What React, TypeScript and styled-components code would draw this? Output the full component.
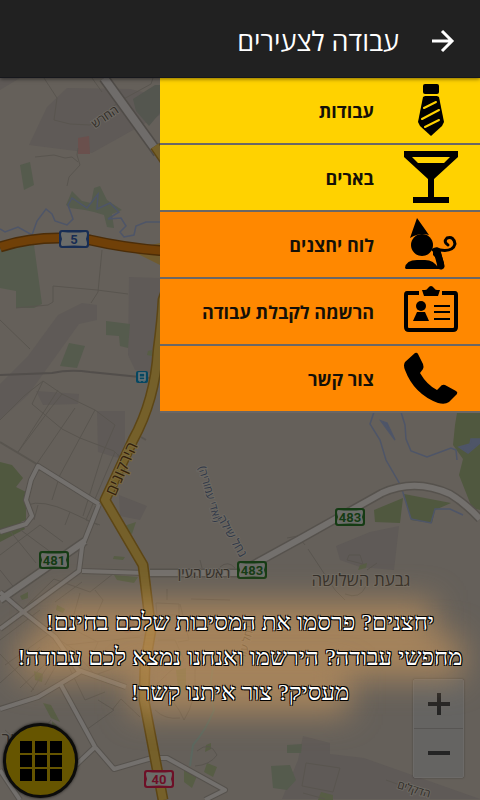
import React from "react";
import styled, { createGlobalStyle } from "styled-components";

const GlobalStyle = createGlobalStyle`
  *, *::before, *::after { box-sizing: border-box; }
  html, body { margin: 0; padding: 0; background: #65605a; }
`;

const Page = styled.div`
  position: relative;
  display: flex;
  flex-direction: column;
  min-height: 100vh;
  overflow: hidden;
  background: #65605a;
  font-family: "Open Sans", "Noto Sans", "Liberation Sans", sans-serif;
`;

const MapCanvas = styled.svg`
  position: absolute;
  inset: 0;
  width: 100%;
  height: 100%;
`;

const Header = styled.header`
  position: relative;
  z-index: 2;
  display: flex;
  align-items: center;
  gap: 28px;
  height: 78px;
  padding: 4px 21px 0 16px;
  background: #212121;
  border-bottom: 1px solid #16171c;
  box-shadow: 0 1px 4px rgba(0, 0, 0, 0.5);
`;

const Title = styled.h1`
  margin: 0;
  color: #fff;
  font-size: 27px;
  line-height: 36px;
  font-weight: 400;
`;

const BackButton = styled.button`
  display: flex;
  padding: 0;
  border: 0;
  background: none;
  color: #fff;
  cursor: pointer;
`;

const Menu = styled.nav`
  position: relative;
  z-index: 1;
  width: 66.6667%;
  margin-inline: 0 auto;
`;

const MenuList = styled.ul`
  margin: 0;
  padding: 0;
  list-style: none;
`;

const MenuLink = styled.a<{ $tone: "yellow" | "orange" }>`
  display: flex;
  align-items: center;
  gap: 29px;
  height: 67px;
  padding-inline: 21px;
  border-bottom: 2px solid #6b6765;
  background: ${({ $tone }) => ($tone === "yellow" ? "#ffd200" : "#ff8800")};
  color: #141008;
  font-size: 18px;
  line-height: 24px;
  font-weight: 700;
  text-decoration: none;
`;

const MenuIcon = styled.svg`
  flex: none;
  width: 56px;
  height: 56px;
  fill: #000;
`;

const Promo = styled.section`
  position: relative;
  z-index: 1;
  isolation: isolate;
  display: flex;
  flex-direction: column;
  align-items: center;
  margin-top: auto;
  padding: 24px 8px 90px;
  color: #fff;
  font-family: "Liberation Serif", serif;
  font-size: 24px;
  line-height: 35px;
  text-align: center;
  text-shadow: 1px 1px 0 #000, -1px -1px 0 #000, 1px -1px 0 #000, -1px 1px 0 #000;
  pointer-events: none;
`;

const PromoLine = styled.p`
  position: relative;
  margin: 0;

  &::before {
    content: "";
    position: absolute;
    inset: -4px 0;
    z-index: -1;
    background: rgba(205, 153, 93, 0.62);
    filter: blur(16px);
  }
`;

const GridButton = styled.button`
  position: absolute;
  left: 3px;
  bottom: 2px;
  z-index: 1;
  display: flex;
  align-items: center;
  justify-content: center;
  width: 75px;
  height: 75px;
  padding: 0;
  border: 3px solid #0c0c0b;
  border-radius: 50%;
  background: #665500;
  box-shadow: 0 0 3px #111;
`;

const ZoomControl = styled.div`
  position: absolute;
  right: 16px;
  bottom: 22px;
  display: flex;
  flex-direction: column;
  width: 51px;
  border: 1px solid #6c6a68;
  border-radius: 2px;
  background: #656462;
  box-shadow: 0 0 2px rgba(0, 0, 0, 0.35);
`;

const ZoomButton = styled.button`
  display: flex;
  align-items: center;
  justify-content: center;
  height: 48px;
  padding: 0;
  border: 0;
  background: none;
  color: #242424;

  & + & {
    height: 49px;
    border-top: 1px solid #575553;
  }
`;

const Label = styled.text`
  font-family: "Open Sans", "Noto Sans", sans-serif;
  fill: #302c27;
  text-anchor: middle;
  paint-order: stroke;
  stroke: #6c6862;
  stroke-width: 2px;
`;

const WaterLabel = styled(Label)`
  fill: #303848;
`;

const RoadLabel = styled(Label)`
  fill: #33200c;
  stroke: #7a6a3c;
`;

const ShieldText = styled.text`
  font-family: Roboto, "Liberation Sans", sans-serif;
  font-size: 13px;
  font-weight: 700;
  text-anchor: middle;
`;

const Shield = ({ x, y, color, children }: { x: number; y: number; color: string; children: string }) => (
  <g>
    <rect x={x - 15} y={y - 9} width="30" height="18" rx="3" fill={color} />
    <path
      d={`M${x - 12} ${y - 7}Q${x} ${y - 6} ${x + 12} ${y - 7}Q${x + 14} ${y - 6} ${x + 12} ${y}Q${x + 14} ${y + 6} ${x + 12} ${y + 7}Q${x} ${y + 6} ${x - 12} ${y + 7}Q${x - 14} ${y + 6} ${x - 12} ${y}Q${x - 14} ${y - 6} ${x - 12} ${y - 7}Z`}
      fill="#6b6c69"
    />
    <ShieldText x={x} y={y + 5} fill={color}>{children}</ShieldText>
  </g>
);

const WHITE_ROADS =
  "M0 532L26 524L32 516L26 500L31 480L38 466L99 504M99 504L82 547L79 571L0 629M82 571L145 573M0 592L22 611L55 637L78 670L126 687M0 709L38 697L80 672M60 683L95 747L114 769L152 758L167 758L225 790L205 800M95 747L76 765M0 770L20 800";
const WIDE_ROADS = "M0 600L85 541M150 573H238L300 539L382 493Q415 478 450 494Q465 503 480 519";
const YELLOW_ROAD =
  "M155 146L185 190Q178 260 163 300Q162 320 158 350Q155 400 133 440L105 500L143 565L151 630L145 665L144 700L163 800";
const HIGHWAY = "M0 247Q40 234 90 240Q125 248 165 251";

const CityMap = () => (
  <MapCanvas viewBox="0 0 480 800" preserveAspectRatio="xMidYMid slice" aria-hidden="true">
    <g fill="#5f5a57">
      <path d="M0 78H20L0 90ZM67 88L130 89L160 96V115L92 153L29 145L47 107Z" />
      <path d="M129 277L160 278V375L135 370L128 355ZM82 303L97 305V320L79 324L28 395L0 420V384L28 356L58 315Z" />
      <path d="M36 391L79 394L78 404L43 405ZM97 411L125 411V460L98 452ZM336 546L370 532L399 526L394 570L360 567L340 560Z" />
      <path d="M303 736L330 743V754L364 758L480 799H282L298 760ZM119 495L147 506L140 520L120 516Z" />
    </g>
    <g fill="#555b4d">
      <path d="M78 138L89 136L90 154L78 154Z" fill="#6a504d" />
      <path d="M20 165L30 162L34 185L24 190ZM66 205L72 191L82 201L91 203L94 188L100 186L107 200L122 210L112 214L114 228L107 227L104 215L94 212L85 210L70 208Z" />
      <path d="M0 248L34 245L42 304L34 308L16 308V291L0 288ZM106 321L130 324L128 348L120 346L119 336L106 335ZM69 343L85 346L77 368L60 366Z" />
      <path d="M133 99L155 85H160V113L149 126L136 111Z" fill="#54564f" />
      <path d="M0 462L12 465L23 478L16 487L26 492V520L0 530Z" fill="#50583f" />
      <path d="M457 413H480V510L472 508L459 475L463 459L453 445L455 425Z" fill="#50583f" />
      <path d="M374 510L403 498L400 523L375 522ZM404 494L451 503L435 510L432 523L411 520Z" fill="#50583f" />
      <path d="M0 520L20 520L25 529L0 542Z" fill="#50583f" />
      <path d="M271 766L290 765L296 780L287 790L273 788ZM287 745L302 744L301 753H287Z" />
      <path d="M184 767L197 776L192 788L184 782ZM207 763L217 767L213 777L204 772ZM114 575L138 577L134 583L117 580ZM124 526L136 522L132 534L124 532ZM114 556L125 557L123 560L113 559ZM43 703L51 705L60 722L51 718ZM52 721L62 730L59 740L52 732Z" fill="#575d45" />
      <path d="M321 792L333 795V800H318ZM148 351L152 350V356L147 355ZM360 565L367 563L366 568L358 570ZM20 596L28 592V598L22 600ZM57 605L65 609L63 613L56 610ZM34 671L43 674L42 682L35 680ZM176 670L186 668V692L178 688ZM206 745L211 743V749L205 752Z" fill="#575d45" />
    </g>
    <g fill="none" stroke="#4e5568" strokeWidth="1.5">
      <path d="M0 229L5 232L18 227L32 235L37 221L46 209L52 214L55 221L67 225L73 219L68 205L72 198L87 208L98 194L97 209L110 203L119 212L108 219L121 218L126 226L120 232L124 237L134 235L136 226L146 222H160" />
      <path d="M374 412L370 424L380 440L386 460L401 486L411 519M401 412L405 425L406 439L411 451L427 457L451 448L456 450L457 460M411 519L431 523L435 509H450L463 515" />
      <path d="M381 421L387 423L395 440Z" fill="#4e5568" />
      <path d="M459 447L470 444L471 439H480L480 443L468 453Z" fill="#4e5568" />
    </g>
    <path d="M213 668Q208 690 214 710Q206 730 193 745L190 766" fill="none" stroke="#5b675f" strokeWidth="2" />
    <g fill="none" stroke="#59554f" strokeWidth="1">
      <path d="M44 78L57 98L54 120L70 124L90 125L120 101L151 84L153 78M92 78L102 92M35 157L54 155L65 158L72 157L78 162M78 148L77 155L80 165L69 177L67 186" />
      <path d="M102 250L98 292L91 303M16 308L48 305L53 302V286L97 290L128 294M0 320L30 349M0 420L24 396L43 381L62 394L95 410L115 425L102 455L83 516M43 381L32 404L62 429L80 438L114 451L118 455M58 390L18 452M75 408L36 465M95 410L60 475L52 500M115 452L86 520L100 525M62 394L50 409L18 452M27 505Q42 499 70 512L65 525" />
      <path d="M38 505L34 520M70 512L98 525M0 555L40 525L63 542M10 531L36 563M18 528L52 553M28 580L55 552M0 570L16 590M20 612L54 579L90 592L118 570M55 602L82 582M35 624L75 650M63 624L98 642L88 665M80 593L70 628M95 590L103 600L92 625M0 640L40 610M5 665L60 626M0 683L40 647M20 688L59 651M31 692L55 655M45 685L62 655M0 654L34 690M66 645L140 637M64 657L85 700L105 692M82 660L95 675L123 665" />
      <path d="M156 603L179 604V630L158 630ZM191 599L230 600M180 604L189 640L178 642M158 615H179M167 589V600M158 640H175L184 660Q168 672 155 686M160 692Q176 700 184 720Q197 700 195 670L204 650M155 710Q165 720 180 718M197 751Q210 740 217 755Q210 765 195 766" />
      <path d="M308 549L335 590L345 600M349 555H360L363 564L347 560ZM367 570L377 563M305 545L298 536L287 538M345 594Q360 600 366 586M306 763L340 768L333 792L302 786ZM303 793L325 799M386 780L408 788M200 560L202 568M220 567Q228 560 235 568M98 700L114 710L86 730M112 710L121 699L140 717M35 740L51 720M5 730L36 758" />
      <path d="M0 442L40 466M118 455L123 461M141 437L146 440" strokeWidth="2" />
      <path d="M0 375L52 373Q70 369 90 372L150 378" stroke="#524e4b" strokeWidth="2" />
    </g>
    <g fill="none" strokeLinejoin="round">
      <path d="M104 78L158 153" stroke="#504c48" strokeWidth="11" />
      <path d="M104 78L158 153" stroke="#6f6c6a" strokeWidth="8" />
      <path d={WHITE_ROADS} stroke="#56524d" strokeWidth="6" />
      <path d={WIDE_ROADS} stroke="#56524d" strokeWidth="9" />
      <path d={WHITE_ROADS} stroke="#73706d" strokeWidth="4" />
      <path d={WIDE_ROADS} stroke="#73706d" strokeWidth="6" />
      <path d={YELLOW_ROAD} stroke="#5d4615" strokeWidth="11" />
      <path d={YELLOW_ROAD} stroke="#75602a" strokeWidth="8" />
      <path d="M130 250L160 243V265Z" fill="#705b2e" />
      <path d={HIGHWAY} stroke="#4c2d08" strokeWidth="11" />
      <path d={HIGHWAY} stroke="#704008" strokeWidth="8" />
    </g>
    <circle cx="128" cy="626" r="7" fill="#5d4b50" />
    <Shield x={74} y={239} color="#172d54">5</Shield>
    <Shield x={350} y={517} color="#153b14">483</Shield>
    <Shield x={252} y={570} color="#153b14">483</Shield>
    <Shield x={54} y={560} color="#153b14">481</Shield>
    <Shield x={159} y={779} color="#6d1027">40</Shield>
    <g>
      <rect x="136" y="371" width="12" height="12" rx="2" fill="#064761" />
      <rect x="139" y="373" width="6" height="7" fill="none" stroke="#747879" strokeWidth="1.5" />
      <path d="M139 377H145M140 381V382M144 381V382" stroke="#747879" />
    </g>
    <Label x="0" y="4" fontSize="12" transform="translate(105 117) rotate(-34)">החרש</Label>
    <RoadLabel x="0" y="5" fontSize="16" transform="translate(122 469) rotate(-66)">הירקונים</RoadLabel>
    <Label x="204" y="578" fontSize="14">ראש העין</Label>
    <Label x="361" y="586" fontSize="17">גבעת השלושה</Label>
    <Label x="0" y="4" fontSize="11" transform="translate(414 789) rotate(17)">הדקלים</Label>
    <Label x="8" y="745" fontSize="17">יר</Label>
    <Label x="0" y="4" fontSize="11" transform="translate(246 641) rotate(-75)">נחל עוז</Label>
    <WaterLabel x="0" y="4" fontSize="11" transform="translate(210 494) rotate(74)">(ואדי עמוריה)</WaterLabel>
    <WaterLabel x="0" y="4" fontSize="12" transform="translate(232 536) rotate(60)">נחל שילה</WaterLabel>
  </MapCanvas>
);

const TieIcon = () => (
  <MenuIcon viewBox="0 0 56 56" aria-hidden="true">
    <rect x="20" y="1" width="16" height="10" rx="2" />
    <path d="M22 13H34L36 14L41 39L39 43L28 53L17 43L15 39L20 14Z" />
    <path d="M21 25L33 19M19 36L36 27M22 44L36 37" fill="none" stroke="#ffd200" strokeWidth="2" strokeLinecap="round" />
  </MenuIcon>
);

const GlassIcon = () => (
  <MenuIcon viewBox="0 0 56 56" aria-hidden="true">
    <path fillRule="evenodd" d="M1 1H55V7L31 29V47H46V53H10V47H25V29L1 7ZM9 7L15 13H41L47 7Z" />
  </MenuIcon>
);

const JesterIcon = () => (
  <MenuIcon viewBox="0 0 56 56" aria-hidden="true">
    <path d="M14 1L26 18Q17 15 7 21Z" />
    <circle cx="19" cy="28" r="11" />
    <path d="M2 51Q3 43 14 43H22Q31 43 35 51L34 52H3Z" />
    <path d="M30 34Q33 30 37 33L41 46Q41 52 35 52H28L34 50Q36 43 30 38Z" />
    <path d="M34 34L38 49" fill="none" stroke="#000" strokeWidth="7" strokeLinecap="round" />
    <path d="M30 33Q33 31 37 33Q50 35 52 27Q51 19 44 21Q40 25 45 28" fill="none" stroke="#000" strokeWidth="3" strokeLinecap="round" />
  </MenuIcon>
);

const BadgeIcon = () => (
  <MenuIcon viewBox="0 0 56 56" aria-hidden="true">
    <path d="M16 9H4Q3 9 3 11V43Q3 46 6 46H50Q53 46 53 43V11Q53 9 52 9H39" fill="none" stroke="#000" strokeWidth="4" />
    <path d="M19 6H22Q24 6 25 4Q28 0 31 4Q32 6 34 6H37L35 12H21Z" />
    <circle cx="18" cy="22" r="5" />
    <path d="M14 28H22L26 37H10Z" />
    <path d="M31 22H47M31 28H47M31 35H47" stroke="#000" strokeWidth="2" />
  </MenuIcon>
);

const PhoneIcon = () => (
  <MenuIcon viewBox="0 0 56 56" aria-hidden="true">
    <path d="M12 2L2 11Q0 14 2 19Q11 43 35 52Q42 54 46 51L54 43Q55 41 53 40L42 34Q39 33 37 36L34 39Q24 34 17 22L20 18Q21 16 20 13L15 3Q14 1 12 2Z" />
  </MenuIcon>
);

const MENU = [
  { label: "עבודות", tone: "yellow", Icon: TieIcon },
  { label: "בארים", tone: "yellow", Icon: GlassIcon },
  { label: "לוח יחצנים", tone: "orange", Icon: JesterIcon },
  { label: "הרשמה לקבלת עבודה", tone: "orange", Icon: BadgeIcon },
  { label: "צור קשר", tone: "orange", Icon: PhoneIcon },
] as const;

const PROMO_LINES = [
  "יחצנים? פרסמו את המסיבות שלכם בחינם!",
  "מחפשי עבודה? הירשמו ואנחנו נמצא לכם עבודה!",
  "מעסיק? צור איתנו קשר!",
];

export default function App() {
  return (
    <Page dir="rtl" lang="he">
      <GlobalStyle />
      <CityMap />
      <Header>
        <BackButton type="button" aria-label="חזרה">
          <svg width="32" height="32" viewBox="0 0 32 32" fill="none" stroke="currentColor" strokeWidth="3">
            <path d="M5 16H25M15 6L25 16L15 26" />
          </svg>
        </BackButton>
        <Title>עבודה לצעירים</Title>
      </Header>
      <Menu>
        <MenuList>
          {MENU.map(({ label, tone, Icon }) => (
            <li key={label}>
              <MenuLink href="#" $tone={tone}>
                <Icon />
                {label}
              </MenuLink>
            </li>
          ))}
        </MenuList>
      </Menu>
      <ZoomControl>
        <ZoomButton type="button" aria-label="התקרב">
          <svg width="24" height="24" viewBox="0 0 24 24" stroke="currentColor" strokeWidth="4">
            <path d="M1 12H23M12 1V23" />
          </svg>
        </ZoomButton>
        <ZoomButton type="button" aria-label="התרחק">
          <svg width="24" height="24" viewBox="0 0 24 24" stroke="currentColor" strokeWidth="4">
            <path d="M1 12H23" />
          </svg>
        </ZoomButton>
      </ZoomControl>
      <Promo>
        {PROMO_LINES.map((line) => (
          <PromoLine key={line}>{line}</PromoLine>
        ))}
      </Promo>
      <GridButton type="button" aria-label="תפריט">
        <svg width="42" height="40" viewBox="0 0 42 40" fill="#000">
          {[0, 14, 28].map((y) =>
            [0, 15, 30].map((x) => <rect key={`${x}-${y}`} x={x} y={y} width="12" height="12" />),
          )}
        </svg>
      </GridButton>
    </Page>
  );
}
